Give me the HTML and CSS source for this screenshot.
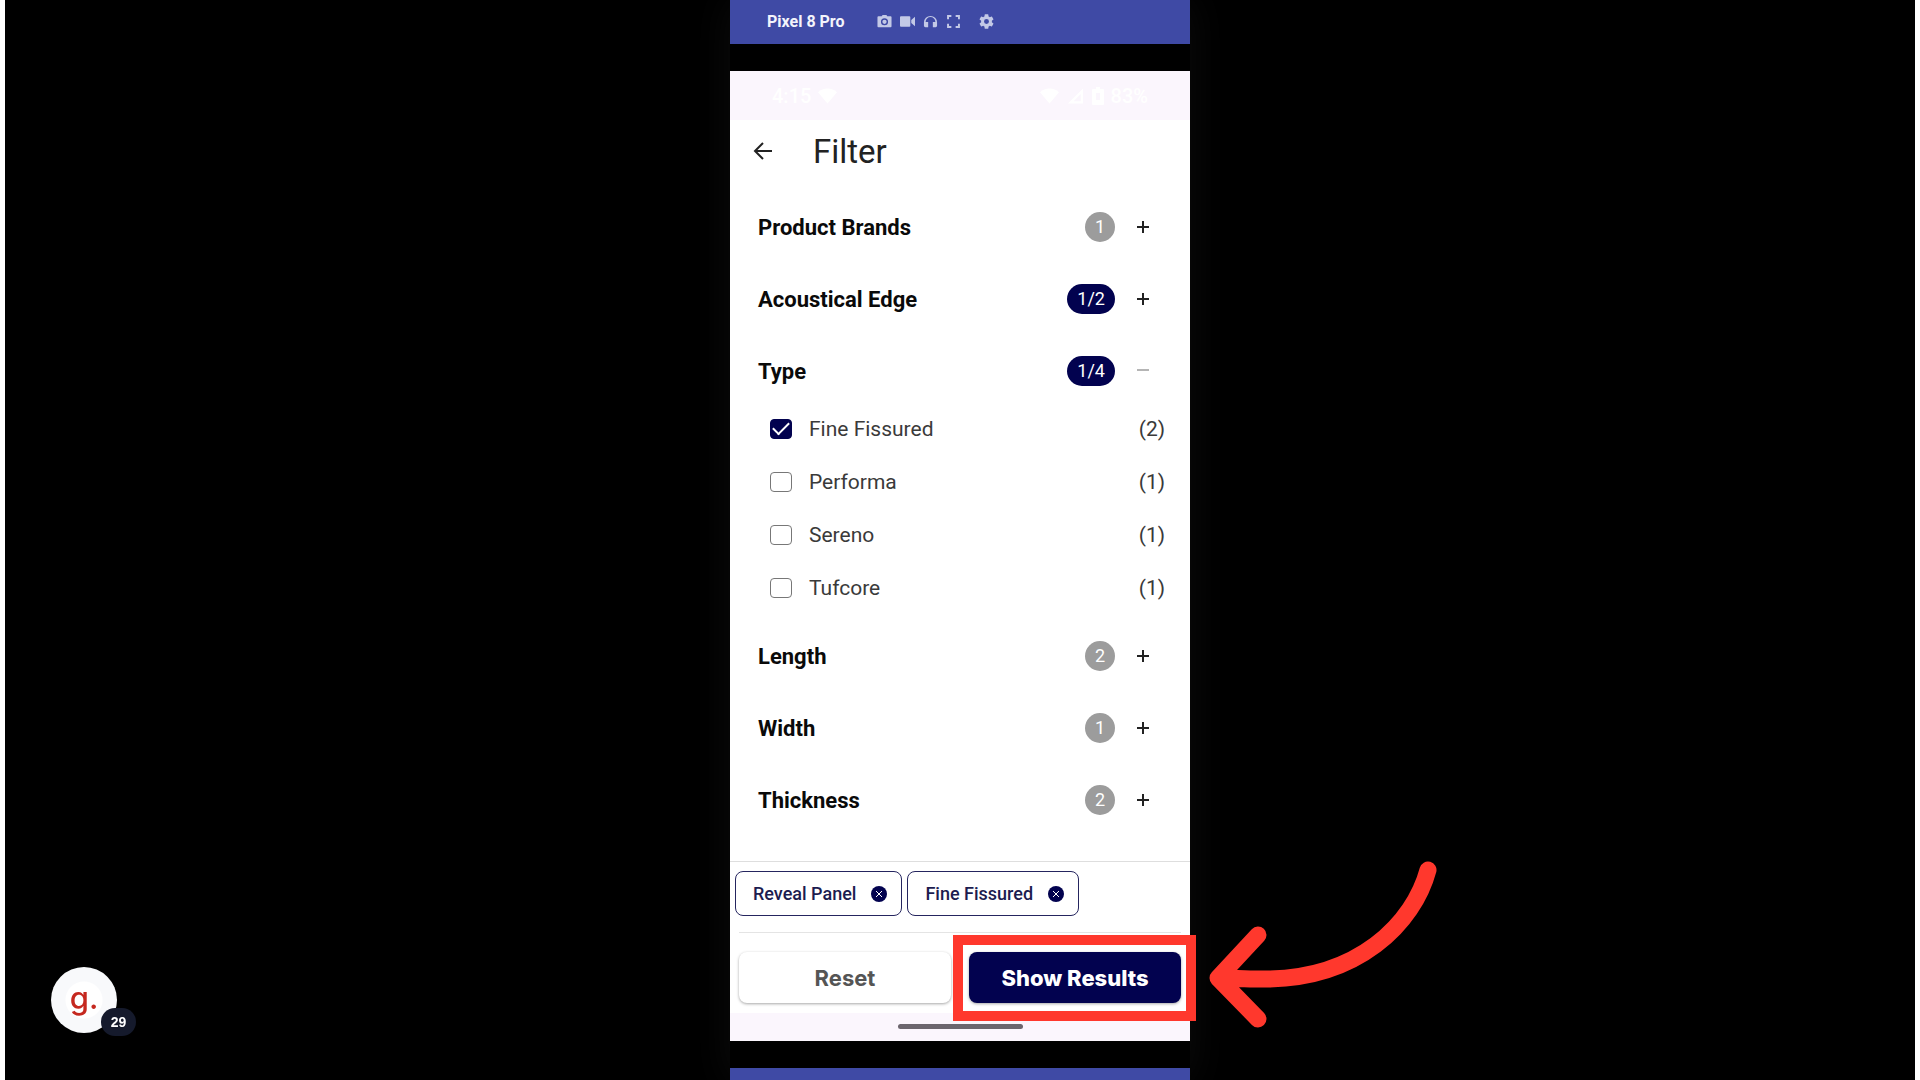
FILE: index.html
```html
<!DOCTYPE html>
<html lang="en">
<head>
    <meta charset="UTF-8">
    <meta name="viewport" content="width=device-width, initial-scale=1.0">
    <title>Filter</title>
    <link rel="stylesheet" href="styles.css">
</head>
<body>
    <main class="stage">
        <div class="device">
            <header class="device-bar">
                <span class="device-name">Pixel 8 Pro</span>
                <div class="device-tools">
                    <button class="tool" aria-label="Screenshot">
                        <svg viewBox="0 0 16 16"><path fill-rule="evenodd" d="M5 2.500 6 1h4l1 1.500h3.500a1 1 0 0 1 1 1V13a1 1 0 0 1-1 1h-13a1 1 0 0 1-1-1V3.500a1 1 0 0 1 1-1zM8 4.500a3.800 3.800 0 1 0 0 7.600 3.800 3.800 0 0 0 0-7.600zM8 6a2.300 2.300 0 1 1 0 4.600A2.300 2.300 0 0 1 8 6z"/></svg>
                    </button>
                    <button class="tool" aria-label="Record video">
                        <svg viewBox="0 0 16 16"><path d="M1 2.500h9a1 1 0 0 1 1 1v9a1 1 0 0 1-1 1H1a1 1 0 0 1-1-1v-9a1 1 0 0 1 1-1zM12 6.500l4-3.500v10l-4-3.500z"/></svg>
                    </button>
                    <button class="tool" aria-label="Audio">
                        <svg viewBox="0 0 16 16"><path d="M1 9a7 7 0 0 1 14 0v3.500A1.500 1.500 0 0 1 13.500 14H10.500V8.500H13.200a5.200 5.200 0 0 0-10.400 0H5.500V14H2.500A1.500 1.500 0 0 1 1 12.500z"/></svg>
                    </button>
                    <button class="tool" aria-label="Full screen">
                        <svg viewBox="1 1 14 14"><path d="M2 6V2h4v1.800H3.800V6zM10 2h4v4h-1.800V3.800H10zM2 10h1.800v2.200H6V14H2zM12.200 10H14v4h-4v-1.800h2.200z"/></svg>
                    </button>
                    <button class="tool tool-settings" aria-label="Settings">
                        <svg viewBox="2 2 20 20"><path d="M19.140 12.940c.040-.300.060-.610.060-.940s-.020-.640-.070-.940l2.030-1.580a.49.49 0 0 0 .12-.61l-1.920-3.320a.49.49 0 0 0-.59-.22l-2.390.96a7 7 0 0 0-1.620-.94l-.36-2.540A.48.48 0 0 0 13.920 2.400h-3.840a.48.48 0 0 0-.48.410l-.36 2.540a7 7 0 0 0-1.620.94l-2.390-.96a.49.49 0 0 0-.59.22L2.720 8.870a.49.49 0 0 0 .12.61l2.030 1.580a6 6 0 0 0 0 1.880l-2.030 1.580a.49.49 0 0 0-.12.61l1.920 3.320c.12.22.37.29.59.22l2.390-.96c.5.38 1.030.7 1.620.94l.36 2.540c.05.24.24.41.48.41h3.840c.24 0 .44-.17.470-.41l.36-2.540a7 7 0 0 0 1.620-.94l2.390.96c.22.08.47 0 .59-.22l1.920-3.320a.49.49 0 0 0-.12-.61zM12 15.300a3.300 3.300 0 1 1 0-6.600 3.300 3.300 0 0 1 0 6.600z"/></svg>
                    </button>
                </div>
            </header>

            <div class="screen">
                <div class="status-bar">
                    <span>4:15</span>
                    <svg class="status-icon" viewBox="0 0 20 16"><path d="M0 4a15 15 0 0 1 20 0L10 16z"/></svg>
                    <svg class="status-icon status-right" viewBox="0 0 20 16"><path d="M0 4a15 15 0 0 1 20 0L10 16z"/></svg>
                    <svg class="status-icon" viewBox="0 0 20 16"><path d="M18 0v16H2zM15.500 6v7.500H8z" fill-rule="evenodd"/></svg>
                    <svg class="status-icon status-battery" viewBox="0 0 12 18"><path d="M4 0h4v2h3a1 1 0 0 1 1 1v14a1 1 0 0 1-1 1H1a1 1 0 0 1-1-1V3a1 1 0 0 1 1-1h3zM4 6v7h4V6z" fill-rule="evenodd"/></svg>
                    <span>83%</span>
                </div>

                <div class="app-bar">
                    <button class="back" aria-label="Back">
                        <svg viewBox="0 0 20 20"><path d="M19 10H2M10 2l-8 8 8 8"/></svg>
                    </button>
                    <h1>Filter</h1>
                </div>

                <div class="filters">
                    <button class="group" aria-expanded="false">
                        <span class="group-name">Product Brands</span>
                        <span class="count">1</span>
                        <svg class="sign" viewBox="0 0 16 16"><path d="M2 8h12M8 2v12"/></svg>
                    </button>
                    <button class="group" aria-expanded="false">
                        <span class="group-name">Acoustical Edge</span>
                        <span class="count count-active">1/2</span>
                        <svg class="sign" viewBox="0 0 16 16"><path d="M2 8h12M8 2v12"/></svg>
                    </button>
                    <div>
                        <button class="group" aria-expanded="true">
                            <span class="group-name">Type</span>
                            <span class="count count-active">1/4</span>
                            <svg class="sign sign-minus" viewBox="0 0 16 16"><path d="M2 7h12"/></svg>
                        </button>
                        <div class="options">
                            <label class="option"><input type="checkbox" checked><span class="option-name">Fine Fissured</span><span>(2)</span></label>
                            <label class="option"><input type="checkbox"><span class="option-name">Performa</span><span>(1)</span></label>
                            <label class="option"><input type="checkbox"><span class="option-name">Sereno</span><span>(1)</span></label>
                            <label class="option"><input type="checkbox"><span class="option-name">Tufcore</span><span>(1)</span></label>
                        </div>
                    </div>
                    <button class="group" aria-expanded="false">
                        <span class="group-name">Length</span>
                        <span class="count">2</span>
                        <svg class="sign" viewBox="0 0 16 16"><path d="M2 8h12M8 2v12"/></svg>
                    </button>
                    <button class="group" aria-expanded="false">
                        <span class="group-name">Width</span>
                        <span class="count">1</span>
                        <svg class="sign" viewBox="0 0 16 16"><path d="M2 8h12M8 2v12"/></svg>
                    </button>
                    <button class="group" aria-expanded="false">
                        <span class="group-name">Thickness</span>
                        <span class="count">2</span>
                        <svg class="sign" viewBox="0 0 16 16"><path d="M2 8h12M8 2v12"/></svg>
                    </button>
                </div>

                <div class="chips">
                    <button class="chip">Reveal Panel
                        <svg viewBox="0 0 16 16"><circle cx="8" cy="8" r="8"/><path d="M5 5l6 6M11 5l-6 6"/></svg>
                    </button>
                    <button class="chip">Fine Fissured
                        <svg viewBox="0 0 16 16"><circle cx="8" cy="8" r="8"/><path d="M5 5l6 6M11 5l-6 6"/></svg>
                    </button>
                </div>

                <div class="actions">
                    <button class="action">Reset</button>
                    <div class="marked">
                        <button class="action action-primary">Show Results</button>
                        <div class="marker"></div>
                        <svg class="arrow" viewBox="0 0 232 170"><path d="M219 10C205 62 150 121 50 119 36 119 22 118 9 118M49 75 9 118l40 41"/></svg>
                    </div>
                </div>

                <div class="nav-bar"><div class="nav-handle"></div></div>
            </div>
            <div class="device-foot"></div>
        </div>

        <button class="guide">
            <span class="guide-logo">g.</span>
            <span class="guide-count">29</span>
        </button>
    </main>
</body>
</html>
```
FILE: styles.css
```css
* {
    box-sizing: border-box;
}

body {
    margin: 0;
    padding: 0 5px;
    background: #fff;
    font-family: Roboto, sans-serif;
    color: #222;
}

button {
    margin: 0;
    padding: 0;
    border: none;
    background: none;
    font: inherit;
    color: inherit;
    cursor: pointer;
}

svg {
    display: block;
    flex: none;
}

.stage {
    display: flex;
    justify-content: center;
    min-height: 100vh;
    background: #000;
    overflow: hidden;
}

/* device frame */
.device {
    display: flex;
    flex-direction: column;
    width: 100%;
    max-width: 460px;
    background: #000;
    box-shadow: 0 0 40px rgba(255, 255, 255, 0.05);
}

.device-bar {
    display: flex;
    align-items: center;
    gap: 32px;
    height: 44px;
    padding: 0 37px 2px;
    background: #3f4aa5;
    color: #f3f4fb;
    font-size: 16px;
    font-weight: bold;
}

.device-tools {
    display: flex;
    gap: 8px;
}

.tool svg {
    width: 15px;
    height: 15px;
    fill: #c3c9e6;
}

.tool-settings {
    margin-left: 10px;
}

.device-foot {
    flex: 1;
    min-height: 13px;
    margin-top: 27px;
    background: #3f4aa5;
}

.screen {
    margin-top: 27px;
    background: #fff;
}

.status-bar {
    display: flex;
    align-items: center;
    gap: 7px;
    height: 49px;
    padding: 0 42px;
    background: #fbf6fd;
    color: #fff;
    font-size: 20px;
    font-weight: 500;
}

.status-icon {
    width: 19px;
    height: 16px;
    fill: #fff;
}

.status-right {
    margin-left: auto;
}

.status-battery {
    width: 12px;
    height: 18px;
}

.app-bar {
    display: flex;
    align-items: center;
    gap: 40px;
    height: 62px;
    padding: 0 23px;
}

.back svg {
    width: 20px;
    height: 20px;
    fill: none;
    stroke: #222;
    stroke-width: 2;
}

h1 {
    margin: 0;
    font-size: 33px;
    font-weight: 400;
}

/* filter groups */
.filters {
    display: flex;
    flex-direction: column;
    gap: 12px;
    padding: 15px 0 31px;
}

.group {
    display: flex;
    align-items: center;
    width: 100%;
    height: 60px;
    padding: 0 39px 0 28px;
    text-align: left;
    color: #0a0a0a;
    font-size: 22px;
    font-weight: 700;
}

.group-name {
    flex: 1;
}

.count {
    min-width: 30px;
    padding: 0 10px;
    border-radius: 15px;
    background: #9c9c9c;
    color: #fff;
    font-size: 18px;
    font-weight: 400;
    line-height: 30px;
    text-align: center;
}

.count-active {
    background: #02024f;
}

.sign {
    width: 16px;
    height: 16px;
    margin-left: 20px;
    fill: none;
    stroke: #222;
    stroke-width: 2;
}

.sign-minus {
    stroke: #b5b5b5;
}

.options {
    padding-top: 1px;
}

.option {
    display: flex;
    align-items: center;
    height: 53px;
    padding: 0 25px 0 40px;
    color: #3a3a3a;
    font-size: 21px;
}

.option input {
    display: grid;
    place-items: center;
    appearance: none;
    width: 22px;
    height: 20px;
    margin: 0 17px 0 0;
    border: 1px solid #777;
    border-radius: 4px;
}

.option input:checked {
    border-color: #02024f;
    background: #02024f;
}

.option input:checked::after {
    content: "";
    width: 14px;
    height: 7px;
    margin-bottom: 4px;
    border: solid #fff;
    border-width: 0 0 2px 2px;
    transform: rotate(-45deg);
}

.option-name {
    flex: 1;
}

/* selected filters */
.chips {
    display: flex;
    gap: 5px;
    padding: 9px 5px 16px;
    border-top: 1px solid #dedede;
}

.chip {
    display: flex;
    align-items: center;
    gap: 15px;
    height: 45px;
    padding: 0 14px 0 17px;
    border: 1px solid #25255f;
    border-radius: 8px;
    color: #1c1c50;
    font-size: 18px;
    font-weight: 500;
}

.chip svg {
    width: 16px;
    height: 16px;
    fill: #02024f;
    stroke: #fff;
    stroke-width: 1;
}

.chip circle {
    stroke: none;
}

.actions {
    display: grid;
    grid-template-columns: 1fr 1fr;
    gap: 18px;
    margin: 0 9px;
    padding: 19px 0 10px;
    border-top: 1px solid #e4e4e4;
}

.action {
    width: 100%;
    height: 51px;
    border-radius: 8px;
    background: #fff;
    box-shadow: 0 1px 3px rgba(0, 0, 0, 0.35);
    color: #555;
    font-family: Inter, sans-serif;
    font-size: 22px;
    font-weight: 700;
}

.action-primary {
    background: #02024f;
    color: #fff;
    font-weight: 800;
}

.marked {
    position: relative;
}

.marker {
    position: absolute;
    inset: -17px -15px -18px -16px;
    border: 10px solid #ff382d;
    pointer-events: none;
}

.arrow {
    position: absolute;
    top: -92px;
    left: 240px;
    width: 232px;
    height: 170px;
    fill: none;
    stroke: #ff382d;
    stroke-width: 17;
    stroke-linecap: round;
    stroke-linejoin: round;
}

.nav-bar {
    display: flex;
    justify-content: center;
    height: 28px;
    padding-top: 11px;
    background: #fbf6fd;
}

.nav-handle {
    width: 125px;
    height: 5px;
    border-radius: 3px;
    background: #6c666e;
}

/* floating guide button */
.guide {
    position: fixed;
    left: 51px;
    bottom: 47px;
    width: 66px;
    height: 66px;
    padding-bottom: 6px;
    border-radius: 50%;
    background: radial-gradient(circle, #fff 18px, #f8f9fb 19px);
}

.guide-logo {
    color: #c5281f;
    font-family: Inter, sans-serif;
    font-size: 31px;
    font-weight: 500;
}

.guide-count {
    position: absolute;
    left: 50px;
    bottom: -3px;
    width: 35px;
    border-radius: 14px;
    background: #151a2c;
    color: #fff;
    font-family: "Liberation Sans", Arial, sans-serif;
    font-size: 14px;
    font-weight: bold;
    line-height: 28px;
}
```
